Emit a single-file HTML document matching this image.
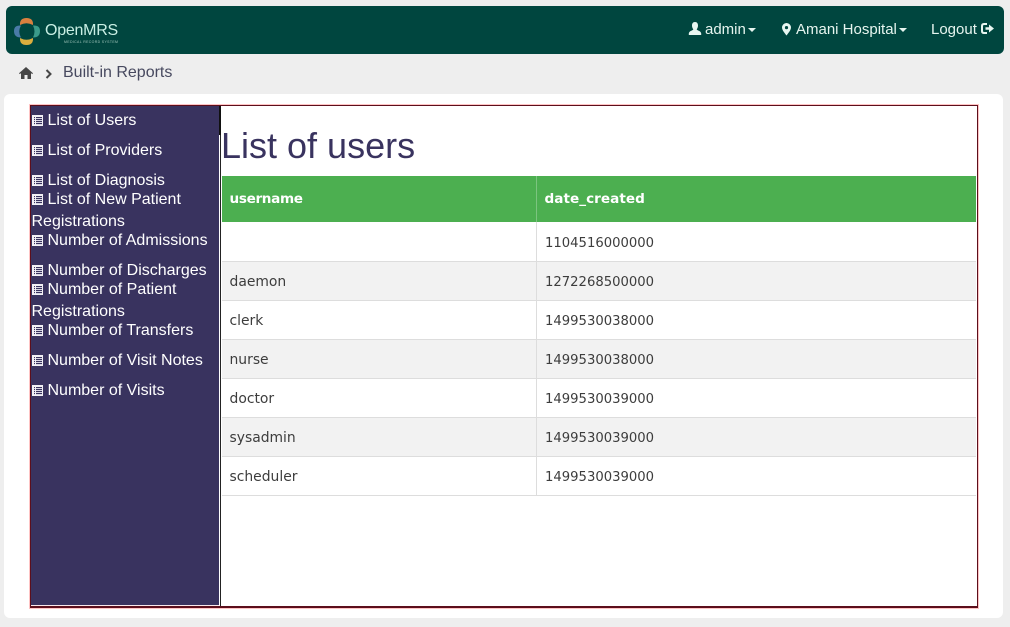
<!DOCTYPE html>
<html><head><meta charset="utf-8"><style>
html,body{margin:0;padding:0}
body{width:1010px;height:627px;position:relative;overflow:hidden;background:#eee;font-family:"Liberation Sans",sans-serif}
.a{position:absolute;white-space:nowrap}
svg{position:absolute;overflow:visible}
.nav{color:#e6f5ef;font-size:15px;line-height:20px;top:20px}
.m{left:47.5px;color:#fff;font-size:16px;line-height:20px}
.i{left:32px;width:11px;height:11px;background:#f2f1f5;box-sizing:border-box}
.i:after{content:"";position:absolute;left:1.5px;right:1.5px;top:1.5px;bottom:1.5px;background:repeating-linear-gradient(#39335f 0 1px,#d8d6e2 1px 2px)}
.i:before{content:"";position:absolute;left:3px;top:1px;bottom:1px;width:1px;background:#f2f1f5;z-index:1}
.r{left:222px;width:754px;height:38px;border-bottom:1px solid #ddd}
.t{font-family:"DejaVu Sans",sans-serif;font-size:13.2px;color:#3d3d3d;line-height:20px}
.n{font-size:13.9px;left:229.5px}
</style></head><body>
<div class="a" style="left:6px;top:6px;width:998px;height:48px;background:#00463f;border-radius:6px"></div>
<svg style="left:0;top:0" width="60" height="60" viewBox="0 0 60 60">
<path d="M20 25Q19.500 18 26.500 18Q33.500 18 33 25Q26.500 21.500 20 25Z" fill="#d9803f"/>
<path d="M21 25.500Q14 25 14 31Q14 37.500 21 37.500Q17.500 31.500 21 25.500Z" fill="#4a7ba8"/>
<path d="M33 25.500Q40 25 40 31Q40 37.500 33 37.500Q36 31.500 33 25.500Z" fill="#3b9b8a"/>
<path d="M20 38Q26.500 41.500 33 38Q33.500 45 26.500 45Q19.500 45 20 38Z" fill="#dcae3e"/>
</svg>
<div class="a" style="left:45px;top:20px;font-size:16px;line-height:22px;color:#c9efe4;letter-spacing:-.25px">OpenMRS</div>
<div class="a" style="left:64px;top:40px;font-size:3.500px;line-height:4px;color:#9fc4ba;letter-spacing:.35px">MEDICAL RECORD SYSTEM</div>

<svg style="left:688px;top:22px" width="14" height="14" viewBox="0 0 14 14"><path d="M7 0C9.200 0 10 1.800 10 3.600C10 5.300 9.200 6.600 8.700 7.400C9 8.600 13 8.800 13.200 11.500V13H.8V11.500C1 8.800 5 8.600 5.300 7.400C4.800 6.600 4 5.300 4 3.600C4 1.800 4.800 0 7 0Z" fill="#e8f6f1"/></svg>
<div class="a nav" style="left:705px">admin</div>
<svg style="left:748px;top:28px" width="8" height="4"><path d="M0 0H8L4 4Z" fill="#e6f5ef"/></svg>
<svg style="left:782px;top:23px" width="9" height="13" viewBox="0 0 9 13"><path fill-rule="evenodd" d="M4.500 0A4.500 4.500 0 0 1 9 4.500C9 7.200 6 10.500 4.500 12.500C3 10.500 0 7.200 0 4.500A4.500 4.500 0 0 1 4.500 0ZM4.500 3A1.600 1.600 0 1 0 4.500 6.200A1.600 1.600 0 1 0 4.500 3Z" fill="#e8f6f1"/></svg>
<div class="a nav" style="left:796px">Amani Hospital</div>
<svg style="left:899px;top:28px" width="8" height="4"><path d="M0 0H8L4 4Z" fill="#e6f5ef"/></svg>
<div class="a nav" style="left:931px">Logout</div>
<svg style="left:981px;top:23px" width="13" height="12" viewBox="0 0 13 12"><path d="M6 1H3Q1 1 1 3V8Q1 10 3 10H6" fill="none" stroke="#e8f6f1" stroke-width="2"/><path d="M4.500 4.200H8V1.500L13 5.500L8 9.500V6.800H4.500Z" fill="#e8f6f1"/></svg>

<svg style="left:19px;top:67px" width="14" height="12" viewBox="0 0 14 12"><path d="M7 0L14 6.300L13.200 7.100L12 6.100V12H8.500V8H5.500V12H2V6.100L.8 7.100L0 6.300Z" fill="#464646"/></svg>
<svg style="left:45px;top:69px" width="7" height="10" viewBox="0 0 7 10"><path d="M1.500 1L5.500 5L1.500 9" fill="none" stroke="#464646" stroke-width="2"/></svg>
<div class="a" style="left:63px;top:63px;font-size:16px;line-height:20px;color:#47495f">Built-in Reports</div>

<div class="a" style="left:4px;top:94px;width:999px;height:524px;background:#fff;border-radius:6px"></div>
<div class="a" style="left:29px;top:104px;width:950px;height:505px;border:1px solid #ffc4c4;box-sizing:border-box"></div>
<div class="a" style="left:30px;top:105px;width:948px;height:503px;border:1px solid #5c0f1c;box-sizing:border-box;border-width:1px 1px 2px 1px"></div>
<div class="a" style="left:31px;top:106px;width:188px;height:499px;background:#39335f"></div>
<div class="a" style="left:31px;top:605px;width:188px;height:1px;background:#fbe9ec"></div>
<div class="a" style="left:219px;top:106px;width:1.500px;height:29px;background:#111"></div>
<div class="a" style="left:220px;top:135px;width:1px;height:471px;background:#222"></div>

<div class="a i" style="top:115px"></div><div class="a m" style="top:111px">List of Users</div>
<div class="a i" style="top:145px"></div><div class="a m" style="top:141px">List of Providers</div>
<div class="a i" style="top:175px"></div><div class="a m" style="top:171px">List of Diagnosis</div>
<div class="a i" style="top:194px"></div><div class="a m" style="top:190px">List of New Patient</div>
<div class="a m" style="top:212px;left:31.500px">Registrations</div>
<div class="a i" style="top:235px"></div><div class="a m" style="top:231px">Number of Admissions</div>
<div class="a i" style="top:265px"></div><div class="a m" style="top:261px">Number of Discharges</div>
<div class="a i" style="top:284px"></div><div class="a m" style="top:280px">Number of Patient</div>
<div class="a m" style="top:302px;left:31.500px">Registrations</div>
<div class="a i" style="top:325px"></div><div class="a m" style="top:321px">Number of Transfers</div>
<div class="a i" style="top:355px"></div><div class="a m" style="top:351px">Number of Visit Notes</div>
<div class="a i" style="top:385px"></div><div class="a m" style="top:381px">Number of Visits</div>

<div class="a" style="left:221px;top:125px;font-size:36px;line-height:41px;color:#39335f">List of users</div>

<div class="a" style="left:222px;top:176px;width:754px;height:46px;background:#4caf50"></div>
<div class="a t" style="left:229.500px;top:189px;color:#fff;font-weight:bold;font-size:13.600px;letter-spacing:-.35px">username</div>
<div class="a t" style="left:544.500px;top:189px;color:#fff;font-weight:bold;font-size:13.600px;letter-spacing:.03px">date_created</div>

<div class="a r" style="top:222px;height:39px;background:#fff"></div>
<div class="a r" style="top:262px;background:#f2f2f2"></div>
<div class="a r" style="top:301px;background:#fff"></div>
<div class="a r" style="top:340px;background:#f2f2f2"></div>
<div class="a r" style="top:379px;background:#fff"></div>
<div class="a r" style="top:418px;background:#f2f2f2"></div>
<div class="a r" style="top:457px;background:#fff"></div>
<div class="a" style="left:536px;top:176px;width:1px;height:46px;background:#7cc47f"></div>
<div class="a" style="left:536px;top:222px;width:1px;height:274px;background:#ddd"></div>

<div class="a t" style="left:545px;top:234px">1104516000000</div>
<div class="a t n" style="top:272px">daemon</div><div class="a t" style="left:545px;top:273px">1272268500000</div>
<div class="a t n" style="top:311px">clerk</div><div class="a t" style="left:545px;top:312px">1499530038000</div>
<div class="a t n" style="top:350px">nurse</div><div class="a t" style="left:545px;top:351px">1499530038000</div>
<div class="a t n" style="top:389px">doctor</div><div class="a t" style="left:545px;top:390px">1499530039000</div>
<div class="a t n" style="top:428px">sysadmin</div><div class="a t" style="left:545px;top:429px">1499530039000</div>
<div class="a t n" style="top:467px">scheduler</div><div class="a t" style="left:545px;top:468px">1499530039000</div>
</body></html>
